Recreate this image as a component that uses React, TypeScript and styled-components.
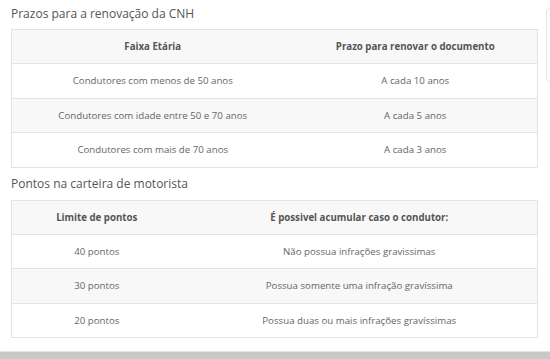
import React from 'react'
import styled, { createGlobalStyle } from 'styled-components'

const GlobalStyle = createGlobalStyle`
  body {
    margin: 0;
    background: #fff;
    font-family: 'Open Sans', 'Liberation Sans', sans-serif;
  }
`

type Row = [string, string]

const renewal: Row[] = [
  ['Condutores com menos de 50 anos', 'A cada 10 anos'],
  ['Condutores com idade entre 50 e 70 anos', 'A cada 5 anos'],
  ['Condutores com mais de 70 anos', 'A cada 3 anos'],
]

const points: Row[] = [
  ['40 pontos', 'Não possua infrações gravissimas'],
  ['30 pontos', 'Possua somente uma infração gravíssima'],
  ['20 pontos', 'Possua duas ou mais infrações gravíssimas'],
]

const InfoTable: React.FC<{ head: Row; rows: Row[]; firstWidth: number }> = ({ head, rows, firstWidth }) => (
  <Table>
    <colgroup>
      <col style={{ width: firstWidth }} />
      <col />
    </colgroup>
    <thead>
      <tr>
        <Th>{head[0]}</Th>
        <Th>{head[1]}</Th>
      </tr>
    </thead>
    <tbody>
      {rows.map((r, i) => (
        <Tr key={i} $striped={i % 2 === 1}>
          <Td>{r[0]}</Td>
          <Td>{r[1]}</Td>
        </Tr>
      ))}
    </tbody>
  </Table>
)

const App: React.FC = () => {
  return (
    <>
      <GlobalStyle />
      <Page>
        <Main>
          <Title>Prazos para a renovação da CNH</Title>
          <InfoTable
            head={['Faixa Etária', 'Prazo para renovar o documento']}
            rows={renewal}
            firstWidth={282}
          />
          <Title>Pontos na carteira de motorista</Title>
          <InfoTable
            head={['Limite de pontos', 'É possivel acumular caso o condutor:']}
            rows={points}
            firstWidth={170}
          />
        </Main>
        <Sidebar>
          <SideCard />
        </Sidebar>
      </Page>
      <Footer />
    </>
  )
}

const Page = styled.div`
  display: flex;
  gap: 8px;
  padding: 5px 0 13px 11px;
  overflow: hidden;
`

const Main = styled.div`
  width: 527px;
  flex-shrink: 0;
  display: flex;
  flex-direction: column;
`

const Title = styled.h3`
  margin: 0 0 6px;
  font-size: 12px;
  line-height: 18px;
  font-weight: 400;
  color: #555;

  table + & {
    margin-top: 7px;
    margin-bottom: 7px;
  }
`

const Table = styled.table`
  width: 100%;
  border-collapse: collapse;
  table-layout: fixed;
  border: 1px solid #e3e3e3;
  font-size: 9.7px;
`

const Th = styled.th`
  height: 33px;
  padding: 0 8px;
  background: #f8f8f8;
  color: #555;
  font-weight: 700;
  text-align: center;
  border-bottom: 1px solid #e3e3e3;
`

const Tr = styled.tr<{ $striped: boolean }>`
  background: ${(p) => (p.$striped ? '#f8f8f8' : '#fff')};
  border-top: 1px solid #e3e3e3;
`

const Td = styled.td`
  height: 33.5px;
  padding: 0 8px;
  color: #666;
  text-align: center;
`

const Sidebar = styled.div`
  padding-top: 3px;
`

const SideCard = styled.div`
  width: 60px;
  height: 72px;
  border: 1px solid #e6e6e6;
  border-radius: 4px;
  background: #fff;
`

const Footer = styled.div`
  height: 8px;
  background: #c8c8c8;
  border-top: 1px solid #e2e2e2;
`

export default App
